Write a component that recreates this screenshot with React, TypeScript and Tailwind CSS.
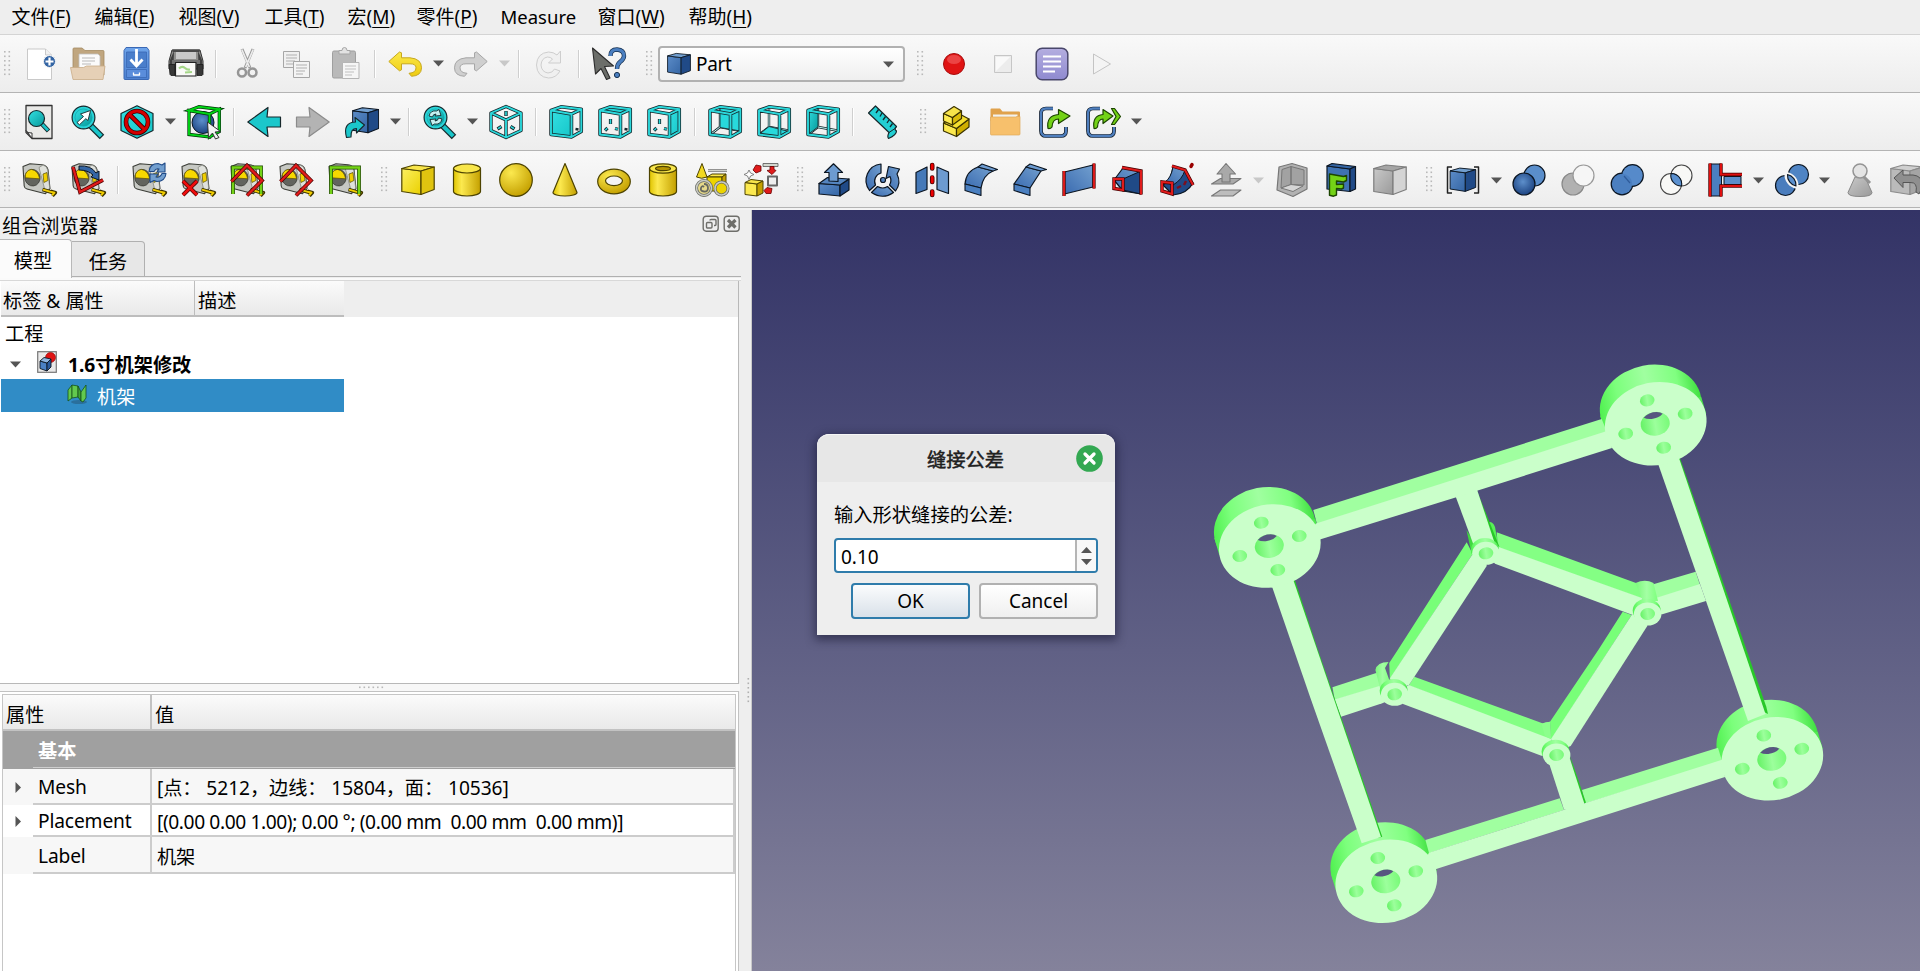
import React from "react";

type Kids = { children?: React.ReactNode };

const INK = "#16282c";
const NAVY = "#0b1521";

function Ico({ children }: Kids) {
  return (
    <div className="flex w-[49px] shrink-0 items-center justify-center">
      <svg width="34" height="34" viewBox="0 0 34 34" fill="none" className="overflow-visible" strokeLinejoin="round">
        {children}
      </svg>
    </div>
  );
}

function Drop({ faded = false }: { faded?: boolean }) {
  return (
    <div className="flex w-[17.300px] shrink-0 items-center justify-center">
      <svg width="11" height="7" viewBox="0 0 11 7">
        <path d="M0 .5h11L5.500 6.500z" fill={faded ? "#c8c8c8" : "#555"} />
      </svg>
    </div>
  );
}

function Sep() {
  return (
    <div className="flex w-[11.400px] shrink-0 items-center justify-center">
      <div className="h-7 w-px bg-[#cfcfcf]" />
      <div className="h-7 w-px bg-white" />
    </div>
  );
}

function Handle({ first = false }: { first?: boolean }) {
  return (
    <div className={first ? "flex w-[14.800px] shrink-0 items-center pl-1" : "flex w-[24px] shrink-0 items-center pl-[12px]"}>
      <svg width="8" height="26" viewBox="0 0 8 26" fill="#b9b9b9">
        {[0, 4.500, 9, 13.500, 18, 22.500].map((y) => (
          <React.Fragment key={y}>
            <rect x="0" y={y} width="1.600" height="1.600" />
            <rect x="4.500" y={y} width="1.600" height="1.600" />
          </React.Fragment>
        ))}
      </svg>
    </div>
  );
}

function Bar({ children, last = false }: Kids & { last?: boolean }) {
  return (
    <div
      className={
        (last ? "h-[57px] pt-[2px]" : "h-[58px]") +
        " flex shrink-0 items-stretch overflow-hidden border-b border-[#b4b4b4] bg-linear-to-b from-[#f9f9f9] to-[#ededed]"
      }
    >
      {children}
    </div>
  );
}

function Defs() {
  return (
    <svg width="0" height="0" className="absolute">
      <defs>
        <linearGradient id="blue" x1="0" y1="0" x2="1" y2="1">
          <stop offset="0" stopColor="#5c8cc8" />
          <stop offset="1" stopColor="#3465a4" />
        </linearGradient>
        <linearGradient id="blueSoft" x1="0" y1="1" x2="1" y2="0">
          <stop offset="0" stopColor="#3a6bb0" />
          <stop offset="1" stopColor="#729fcf" />
        </linearGradient>
        <linearGradient id="yel" x1="0" y1="0" x2="1" y2="1">
          <stop offset="0" stopColor="#fcf060" />
          <stop offset="1" stopColor="#ead000" />
        </linearGradient>
        <linearGradient id="yelH" x1="0" y1="0" x2="1" y2="0">
          <stop offset="0" stopColor="#e0c400" />
          <stop offset=".3" stopColor="#fce94f" />
          <stop offset="1" stopColor="#c4a000" />
        </linearGradient>
        <radialGradient id="yelR" cx=".35" cy=".28" r=".75">
          <stop offset="0" stopColor="#fce94f" />
          <stop offset="1" stopColor="#c4a000" />
        </radialGradient>
        <radialGradient id="blueR" cx=".45" cy=".4" r=".6">
          <stop offset="0" stopColor="#5d8fcb" />
          <stop offset="1" stopColor="#1d4482" />
        </radialGradient>
        <linearGradient id="teal" x1="0" y1="0" x2="1" y2="1">
          <stop offset="0" stopColor="#34e0e2" />
          <stop offset="1" stopColor="#16c6c9" />
        </linearGradient>
        <linearGradient id="tealDark" x1="0" y1="0" x2="1" y2="1">
          <stop offset="0" stopColor="#34e0e2" />
          <stop offset="1" stopColor="#06989a" />
        </linearGradient>
        <linearGradient id="gry" x1="0" y1="0" x2="1" y2="1">
          <stop offset="0" stopColor="#c9c9c9" />
          <stop offset="1" stopColor="#9a9a9a" />
        </linearGradient>
        <linearGradient id="cab" x1="0" y1="0" x2="0" y2="1">
          <stop offset="0" stopColor="#6ea4ea" />
          <stop offset="1" stopColor="#4c80d0" />
        </linearGradient>
        <linearGradient id="undo" x1="0" y1="0" x2="0" y2="1">
          <stop offset="0" stopColor="#fbe94a" />
          <stop offset="1" stopColor="#eecb10" />
        </linearGradient>
        <linearGradient id="note" x1="0" y1="0" x2="0" y2="1">
          <stop offset="0" stopColor="#b4aee0" />
          <stop offset="1" stopColor="#8f8ad0" />
        </linearGradient>
      </defs>
    </svg>
  );
}

/* ---------- icon parts ---------- */

function Solid({ front = "url(#blue)", top = "#729fcf", side = "#204a87", ink = NAVY }: { front?: string; top?: string; side?: string; ink?: string }) {
  return (
    <g stroke={ink} strokeWidth="1.200">
      <path d="M.8 5.500L20 8V31.500L.8 28.500z" fill={front} />
      <path d="M.8 5.500L13 2l20.200 2L20 8z" fill={top} />
      <path d="M20 8l13.200-4v22.500L20 31.500z" fill={side} />
    </g>
  );
}

const EDGE = {
  front: "M2 5.500L22.500 9V32L2 29.500Z",
  top: "M2 5.500L12 1.800L32.300 4.300L22.500 9Z",
  right: "M22.500 9L32.300 4.300V26.500L22.500 32Z",
};

function ViewCube({ fill }: { fill: "front" | "top" | "right" | "rear" | "bottom" | "left" }) {
  const wires = EDGE.front + EDGE.top + EDGE.right;
  const faces: Record<string, string> = {
    ...EDGE,
    rear: "M12 1.800L32.300 4.300V26L12 22.500Z",
    bottom: "M2 29.500L12 21.500L32.300 26.500L22.500 32Z",
    left: "M2 5.500L12 1.800V22L2 29.500Z",
  };
  const back = fill === "rear" || fill === "bottom" || fill === "left";
  return (
    <>
      {back ? (
        <>
          <path d="M12 3V22L3 29M12 22L31 25.500" stroke={INK} strokeWidth="2.400" />
          <path d="M12 3V22L3 29M12 22L31 25.500" stroke="#bff3f3" strokeWidth="1" />
          <path d={faces[fill]} fill={fill === "left" ? "url(#tealDark)" : "#28d9dc"} stroke={INK} strokeWidth=".9" />
        </>
      ) : (
        <>
          <path d="M12.500 14v5M9.500 23L7 25.500M17 23.500l3 .8" stroke={INK} strokeWidth="3.200" />
          <path d="M12.500 14.300v4.400M9.300 23.200L7.200 25.300M17.200 23.500l2.600 .7" stroke="#2adadd" strokeWidth="1.500" />
          {fill !== "right" && <path d="M26.500 24l3 .5" stroke={INK} strokeWidth="2.400" />}
          <path d={faces[fill]} fill="url(#teal)" />
        </>
      )}
      <path d={wires} stroke={INK} strokeWidth="3.500" />
      <path d={wires} stroke="#2bd8db" strokeWidth="1.900" />
    </>
  );
}

function Lens({ children, x = 13, y = 12 }: Kids & { x?: number; y?: number }) {
  return (
    <>
      <path d={`M${x + 6} ${y + 7}L${x + 18.500} ${y + 19.500}`} stroke={INK} strokeWidth="6.400" strokeLinecap="butt" />
      <path d={`M${x + 6} ${y + 7}L${x + 17.700} ${y + 18.700}`} stroke="#19c5c9" strokeWidth="4" />
      <circle cx={x} cy={y} r="11.400" fill="#2bd4d8" stroke={INK} strokeWidth="1.200" />
      <circle cx={x} cy={y} r="8.600" fill="url(#tealDark)" stroke="#0a9ea3" strokeWidth=".6" />
      {children}
    </>
  );
}

function Tape({ children }: Kids) {
  return (
    <>
      <path d="M1 3.500L8 .7l12 1q5 .6 6 5l2 19-4.500 5L5 26q-2.500-.6-2.800-3z" fill="#c6c8c3" stroke="#3a3c36" strokeWidth="1.100" />
      <path d="M17 4.500l4-2.500q4 1 4.700 5l2 18-4 5z" fill="#dfe1dc" stroke="#7b7d76" strokeWidth=".7" />
      <path d="M21 11l4-1.500.9 8-4 2z" fill="#f1cf00" stroke="#544a00" strokeWidth=".7" />
      <ellipse cx="10.500" cy="14.700" rx="7.600" ry="8.300" fill="#62645e" stroke="#33352f" strokeWidth=".7" transform="rotate(-8 10.500 14.700)" />
      <path d="M3.300 14.800Q2.700 7.500 9.300 6.400q6.800.9 8.400 9.400z" fill="#f7d800" stroke="#5a4d00" strokeWidth=".7" />
      <path d="M20.500 26.500l10 3M28.500 28l5 1.600-3 3.400" stroke="#3b3300" strokeWidth="3.400" />
      <path d="M21 26.600l9.500 2.800M29.500 28.800l3 .9-2.300 2.600" stroke="#f1cc00" strokeWidth="1.900" />
      {children}
    </>
  );
}

function Stroke2({ d, c, w = 2.400, o = "#4a0000" }: { d: string; c: string; w?: number; o?: string }) {
  return (
    <>
      <path d={d} stroke={o} strokeWidth={w + 1.400} strokeLinejoin="miter" />
      <path d={d} stroke={c} strokeWidth={w} strokeLinejoin="miter" />
    </>
  );
}

/* ---------- toolbars ---------- */

function FileBar() {
  return (
    <Bar>
      <Handle first />
      <Ico>
        <path d="M5.500 2h18l6 6v24.500h-24z" fill="#fff" stroke="#c9c9c9" strokeWidth="1" />
        <path d="M23.500 2v6h6" fill="#f1f1f1" stroke="#c9c9c9" />
        <circle cx="27.500" cy="14.500" r="6" fill="#3465a4" stroke="#f6f6f6" />
        <path d="M27.500 10.500v8M23.500 14.500h8" stroke="#fff" strokeWidth="2.200" />
      </Ico>
      <Ico>
        <path d="M2 2q0-1 1-1h8l3 2.500h18q1 0 1 1V28H2z" fill="#c0a67f" stroke="#a58c62" strokeWidth=".8" />
        <path d="M8 7h19l2 2v20H8z" fill="#fbfbfb" stroke="#c0c0c0" strokeWidth=".8" />
        <path d="M11 11h13M11 14h13M11 17h9" stroke="#b9b9b9" />
        <path d="M-.500 20.500h13l3-1.500h18.500L32 32.500H2z" fill="#e6d0b6" stroke="#c9ac88" strokeWidth=".8" />
      </Ico>
      <Ico>
        <path d="M6 .500h21l2 3v28q0 1-1 1H5q-1 0-1-1v-28z" fill="url(#cab)" stroke="#3a68b4" />
        <rect x="6.500" y="5" width="20" height="15.500" fill="#4a7ecb" stroke="#3a68b4" strokeWidth=".8" />
        <rect x="6.500" y="22.500" width="20" height="8" fill="#5a8ddb" stroke="#3a68b4" strokeWidth=".8" />
        <path d="M16.500 2v16M10.500 12.500l6 6.500 6-6.500" stroke="#fff" strokeWidth="2.800" strokeLinejoin="miter" />
        <path d="M13.500 25.500V28h6v-2.500" stroke="#fff" strokeWidth="1.300" />
      </Ico>
      <Ico>
        <path d="M3 3h28l3 11v8H0v-8z" fill="#8f8f8d" stroke="#333" />
        <path d="M7 4.500h20v7.500H7z" fill="#c9c9c9" />
        <path d="M3.500 2.500h27V5h-27z" fill="#4a4a4a" />
        <path d="M29 4l4 9v5h-3.500zM5 4L1 13v5h3.500z" fill="#3f3f3f" />
        <path d="M0 17.500h6v11H2l-1-1zM28 17.500h6v10l-1 1h-5z" fill="#383838" stroke="#1c1c1c" strokeWidth=".8" />
        <path d="M3 13h28v4H3z" fill="#707070" />
        <path d="M6.500 15.500h20.500v13.500H6.500z" fill="#f9f9f7" stroke="#222" strokeWidth="1.200" />
        <path d="M10 21.500q3-3 6-.5 2 2 5 1.500M16 25.500l7-.5" stroke="#a5d688" strokeWidth="2.200" />
      </Ico>
      <Sep />
      <Ico>
        <path d="M12 2l8 19M23 2l-8 19" stroke="#9a9a9a" strokeWidth="3" />
        <path d="M11.800 2.500l7.500 17.500M23.200 2.500l-7.500 17.500" stroke="#ececec" strokeWidth="1.700" />
        <circle cx="12" cy="25.500" r="4" stroke="#959595" strokeWidth="2.500" />
        <circle cx="22.500" cy="25.500" r="4" stroke="#959595" strokeWidth="2.500" />
      </Ico>
      <Ico>
        <rect x="4.500" y="4.500" width="16" height="16" fill="#f0f0f0" stroke="#a6a6a6" />
        <path d="M7 8h11M7 11h11M7 14h9M7 17h7" stroke="#b0b0b0" />
        <rect x="14.500" y="14.500" width="16" height="16" fill="#f4f4f4" stroke="#a6a6a6" />
        <path d="M17 18h11M17 21h11M17 24h9M17 27h7" stroke="#b0b0b0" />
      </Ico>
      <Ico>
        <rect x="4.500" y="4" width="23" height="27" rx="1.500" fill="#b9b9b9" stroke="#9f9f9f" />
        <path d="M11 7V3.500h3a2.500 3 0 0 1 5 0h3V7z" fill="#e2e2e2" stroke="#a5a5a5" />
        <rect x="14.500" y="15.500" width="16.500" height="16" fill="#f6f6f6" stroke="#b5b5b5" />
        <path d="M17 19h11M17 22h11M17 25h9M17 28h7" stroke="#c0c0c0" />
      </Ico>
      <Sep />
      <Ico>
        <path d="M.800 14.500L11.500 5l2 .8v5H22q11.500 1 11.500 10 0 8-10 8.500l-2.500-3q7-.5 7-5.500 0-4-6-4h-8.500v6l-2 1z" fill="url(#undo)" stroke="#c7a81e" strokeWidth="1" />
      </Ico>
      <Drop />
      <Ico>
        <path d="M33.200 14.500L22.500 5l-2 .8v5H12Q.5 12 .5 20.800.5 28.800 10.500 29.300l2.500-3q-7-.5-7-5.500 0-4 6-4h8.500v6l2 1z" fill="#cfcfcf" stroke="#a6a6a6" strokeWidth="1" />
      </Ico>
      <Drop faded />
      <Sep />
      <Ico>
        <path d="M28 24q-4 7-11.500 7Q5 30 4.500 18 5 6 16.500 5q5 0 8.500 3l3.500-4v12h-12l4-4q-2-2-5-2-6 1-6.500 8 .5 7 7 8 4.500 0 6.500-4z" fill="#f0f0f0" stroke="#cecece" />
      </Ico>
      <Sep />
      <Ico>
        <path d="M.500 1l21 18-9 .5L18 31l-3.500 1.500L9 21.500 3.500 27z" fill="#6c6e6a" stroke="#2b2b2b" strokeWidth="1.100" />
        <Stroke2 d="M18.500 9q0-6.500 6.500-6.500 7 .5 7 6.500 0 3-4 6-3 2.500-3 7" c="#4b7fc0" w={3} o="#16304f" />
        <circle cx="25" cy="28" r="2.600" fill="#4b7fc0" stroke="#16304f" />
      </Ico>
      <Handle />
      <div className="mt-[11px] flex h-[36px] w-[247.500px] shrink-0 items-center rounded-[4px] border-2 border-[#b1b1b1] bg-linear-to-b from-white to-[#efefef] pr-[6px] pl-[7px]">
        <svg width="24" height="24" viewBox="0 0 34 34" fill="none">
          <Solid />
        </svg>
        <span className="mt-px ml-[5px] grow text-[19px] leading-none tracking-[-0.3px]">Part</span>
        <Drop />
      </div>
      <Handle />
      <Ico>
        <circle cx="17" cy="17" r="10.500" fill="#e01414" stroke="#a80d0d" />
        <ellipse cx="17" cy="12.500" rx="7" ry="4.500" fill="#ec4444" />
      </Ico>
      <Ico>
        <rect x="8.500" y="8.500" width="17" height="17" fill="#ececec" stroke="#c6c6c6" />
        <path d="M10 24V10h14z" fill="#f9f9f9" />
      </Ico>
      <Ico>
        <rect x="1.200" y="1.200" width="31.600" height="31.600" rx="6" fill="url(#note)" stroke="#49476b" strokeWidth="1.500" />
        <path d="M8 9.500h18M8 14.500h18M8 19.500h18M8 24.500h12" stroke="#fff" strokeWidth="1.800" />
      </Ico>
      <Ico>
        <path d="M9.500 7l17 10-17 10z" fill="#f4f4f4" stroke="#c4c4c4" />
      </Ico>
    </Bar>
  );
}

function ViewBar() {
  const iso = "M17 1.500L32 8V25.500L17 32.500L2 25.500V8ZM2 8L17 15L32 8M17 15V32.500";
  return (
    <Bar>
      <Handle first />
      <Ico>
        <path d="M4 .5h26v33H10l-6-6z" fill="#e9e9e7" stroke="#333" strokeWidth="1.300" />
        <path d="M4 25.500q1 3 6 2.500V33z" fill="#fff" stroke="#333" strokeWidth="1" />
        <path d="M19 18l7.500 8" stroke={INK} strokeWidth="4.600" />
        <path d="M19 18l7 7.400" stroke="#19c5c9" strokeWidth="2.800" />
        <circle cx="14.500" cy="13.500" r="8" fill="url(#tealDark)" stroke={INK} strokeWidth="1.200" />
      </Ico>
      <Ico>
        <Lens x={12.500} y={12.500}>
          <path d="M6 17.500L12.500 11.500l-3-2.500 10-3.500L17 15.500l-2.200-1.800-6.300 6z" fill="#fff" stroke={INK} strokeWidth=".9" />
        </Lens>
      </Ico>
      <Ico>
        <path d="M17 .8l16 7.700v17L17 33.200 1 25.500v-17z" fill="url(#teal)" stroke={INK} strokeWidth="1.200" />
        <circle cx="17" cy="17" r="11" stroke="#3c0000" strokeWidth="4.600" />
        <path d="M9.500 9.500l15 15" stroke="#3c0000" strokeWidth="4.600" />
        <circle cx="17" cy="17" r="11" stroke="#d40000" strokeWidth="3.100" />
        <path d="M9.500 9.500l15 15" stroke="#d40000" strokeWidth="3.100" />
      </Ico>
      <Drop />
      <Ico>
        <circle cx="16" cy="17.500" r="11" fill="url(#blueR)" stroke={NAVY} />
        <Stroke2 d={EDGE.front + EDGE.top + EDGE.right} c="#00d414" w={1.900} o="#00360a" />
        <path d="M20.500 17l13 9.500-5.500.5 4 5.500-3.500 1.500-3-6-4 4.500z" fill="#f2f2f2" stroke="#333" strokeWidth="1" />
      </Ico>
      <Sep />
      <Ico>
        <path d="M.800 17L21 2.500 20 12h13.500v10H20l1 9.500z" fill="#1bc7cb" stroke={INK} strokeWidth="1.200" />
      </Ico>
      <Ico>
        <path d="M33.200 17L13 2.500 14 12H.500v10H14l-1 9.500z" fill="#b3b3b3" stroke="#8b8b8b" strokeWidth="1.200" />
      </Ico>
      <Ico>
        <g transform="translate(7 1) scale(.8 .85)">
          <Solid />
        </g>
        <path d="M1.500 32.500q-4-15 9-15.500l-.5-4.500L19.500 20l-8 8v-4.500q-6 0-5.500 8.500z" fill="#1bc7cb" stroke={INK} strokeWidth="1.100" />
      </Ico>
      <Drop />
      <Sep />
      <Ico>
        <Lens x={12.500} y={12.500}>
          <path d="M6 11q1.500-6 7.500-5l2.500-1.500 2 6-6 .5 1-2q-3 0-3.500 3zM19 14q-1.500 6-7.500 5L9 20.500l-2-6 6-.5-1 2q3 0 3.500-3z" fill="#c5f0f0" stroke={INK} strokeWidth=".9" />
        </Lens>
      </Ico>
      <Drop />
      <Ico>
        <path d="M17 6v5M8.500 24l4-2.500M25.500 24l-4-2.500" stroke={INK} strokeWidth="3.400" />
        <path d="M17 6.500v4M9 23.600l3-1.900M25 23.600l-3-1.900" stroke="#2adadd" strokeWidth="1.600" />
        <path d={iso} stroke={INK} strokeWidth="3.400" />
        <path d={iso} stroke="#2bd8db" strokeWidth="1.900" />
      </Ico>
      <Sep />
      <Ico><ViewCube fill="front" /></Ico>
      <Ico><ViewCube fill="top" /></Ico>
      <Ico><ViewCube fill="right" /></Ico>
      <Sep />
      <Ico><ViewCube fill="rear" /></Ico>
      <Ico><ViewCube fill="bottom" /></Ico>
      <Ico><ViewCube fill="left" /></Ico>
      <Sep />
      <Ico>
        <path d="M2.500 8L9.500 1 30.500 21.500q-3 2 0 4.500 0 4-8 7.500-1.500-2 .5-6z" fill="#22cfd3" stroke={INK} strokeWidth="1.200" />
        <path d="M23 27.500l7.500-5" stroke={INK} />
        <path d="M12.500 4.500L10 8M16 8l-2 3.500M19.500 11.500L17 15M23 15l-2 3M26.500 18.500L24 22" stroke={INK} strokeWidth="1.300" />
      </Ico>
      <Handle />
      <Ico>
        <g stroke="#3b3300" strokeWidth="1.200">
          <path d="M4.500 18l13 5.500v8L4.500 26z" fill="#fce94f" />
          <path d="M17.500 23.500L30 14v8l-12.500 9.500z" fill="#cfae00" />
          <path d="M4.500 18l8-5 9-3.500L30 14l-12.500 9.500z" fill="#f5df30" />
          <path d="M4.500 8.500l9 4V20l-9-4z" fill="#fce94f" />
          <path d="M13.500 12.500L22.500 6v7.500L13.500 20z" fill="#dabb0a" />
          <path d="M4.500 8.500L15 1.500l7.500 4.500-9 6.500z" fill="#f7e34a" />
        </g>
      </Ico>
      <Ico>
        <path d="M2.500 4.500q0-1 1-1H12l2.500 3H31q1 0 1 1V16H2.500z" fill="#e0a24c" />
        <path d="M5 9.500h24.500v5H5z" fill="#f2f2ee" />
        <path d="M2.500 12h26v-.5H32v17.500q0 1-1 1H3.500q-1 0-1-1z" fill="#f7c06c" stroke="#dfa95a" strokeWidth=".7" />
      </Ico>
      <Ico>
        <Stroke2 d="M16 3.500H9q-5 0-5 5v17q0 5.500 5 5.500h15q5 0 5-5V22" c="#4f7fbe" w={2.300} o={NAVY} />
        <path d="M11 23.500q-2-13 10.500-14V4.500L33 11l-11.500 7.500V14q-6 0-6.500 8-1.500 2-4 1.500z" fill="#73d216" stroke="#1c4500" strokeWidth="1.200" />
      </Ico>
      <Ico>
        <Stroke2 d="M14 3.500H7q-5 0-5 5v17q0 5.500 5 5.500h16q5 0 5-5V22" c="#4f7fbe" w={2.300} o={NAVY} />
        <path d="M8 23.500q-2-13 9-14V4.500L27 11l-10 7.500V14q-5 0-5.500 8-1.500 2-3.500 1.500z" fill="#73d216" stroke="#1c4500" strokeWidth="1.200" />
        <path d="M25.500 3.500h3l6 8-6 8h-3l4.500-8z" fill="#73d216" stroke="#1c4500" strokeWidth="1.200" />
      </Ico>
      <Drop />
    </Bar>
  );
}

function PartBar() {
  return (
    <Bar last>
      <Handle first />
      <Ico><Tape /></Ico>
      <Ico>
        <Tape>
          <path d="M8 3q12-1 17 7l3-2v9l-8-3 2-2Q17 7 8 7z" fill="#3465a4" stroke={NAVY} />
          <Stroke2 d="M2 4l7 25 23-12" c="#e01b1b" />
        </Tape>
      </Ico>
      <Sep />
      <Ico>
        <Tape>
          <path d="M17 8.500q1-8 9-8l4 1.500 3-2v9h-8l2-3q-3-1-5 2.500zM34 10.500q-1 8-9 8l-3-1-4 2V11h8l-2 3q4 1 6-3.500z" fill="#729fcf" stroke="#204a87" strokeWidth="1.100" />
        </Tape>
      </Ico>
      <Ico>
        <Tape>
          <Stroke2 d="M2 18l14 14M16 18L2 32" c="#ef0d0d" w={2.600} />
        </Tape>
      </Ico>
      <Ico>
        <Tape>
          <Stroke2 d="M3 31V4.500h28V31" c="#73d216" w={2.400} o="#1c4500" />
          <Stroke2 d="M1.500 18.500L17 2.500l15 15-15 15" c="#e01b1b" />
        </Tape>
      </Ico>
      <Ico>
        <Tape>
          <Stroke2 d="M1.500 18.500L17 2.500l15 15-15 15" c="#e01b1b" />
        </Tape>
      </Ico>
      <Ico>
        <Tape>
          <Stroke2 d="M3 31V4.500h28V31" c="#73d216" w={2.400} o="#1c4500" />
        </Tape>
      </Ico>
      <Handle />
      <Ico>
        <Solid front="url(#yel)" top="#f8e54a" side="#e0c410" ink="#4d4300" />
      </Ico>
      <Ico>
        <path d="M3.500 5.500v23a13.500 4.500 0 0 0 27 0v-23z" fill="url(#yelH)" stroke="#4d4300" strokeWidth="1.200" />
        <ellipse cx="17" cy="5.500" rx="13.500" ry="4.500" fill="#f8e64a" stroke="#4d4300" strokeWidth="1.200" />
      </Ico>
      <Ico>
        <circle cx="17" cy="17" r="16.300" fill="url(#yelR)" stroke="#4d4300" strokeWidth="1.200" />
      </Ico>
      <Ico>
        <path d="M17 .5L5 29.500a12 3.500 0 0 0 24 0z" fill="url(#yelH)" stroke="#4d4300" strokeWidth="1.200" />
      </Ico>
      <Ico>
        <ellipse cx="17" cy="18.500" rx="16.300" ry="12.300" fill="url(#yelR)" stroke="#4d4300" strokeWidth="1.200" />
        <ellipse cx="17" cy="17.800" rx="8.500" ry="4.800" fill="#f4f4f4" stroke="#4d4300" strokeWidth="1.200" />
      </Ico>
      <Ico>
        <path d="M3.500 5.500v23a13.500 4.500 0 0 0 27 0v-23z" fill="url(#yelH)" stroke="#4d4300" strokeWidth="1.200" />
        <ellipse cx="17" cy="5.500" rx="13.500" ry="4.700" fill="#f8e64a" stroke="#4d4300" strokeWidth="1.200" />
        <ellipse cx="17" cy="5.500" rx="7.500" ry="2.200" fill="#b59400" stroke="#4d4300" strokeWidth="1.200" />
      </Ico>
      <Ico>
        <path d="M12 14l5-3h14l-4 3z" fill="#fce94f" stroke="#4d4300" />
        <path d="M12 14h15v14H12z" fill="#edd400" stroke="#4d4300" />
        <path d="M27 14l4-3v14l-4 3z" fill="#c4a000" stroke="#4d4300" />
        <path d="M7 .5L1.500 14q5 2.500 10.500 0z" fill="#f2d920" stroke="#4d4300" />
        <Stroke2 d="M13 7.500h19" c="#d0d2cc" w={1.400} o="#777" />
        <circle cx="9" cy="25" r="7.500" fill="#e6d98a" stroke="#666860" strokeWidth="3" />
        <circle cx="9" cy="25" r="7.500" stroke="#c9cbc4" strokeWidth="1.600" />
        <path d="M9 21q4 0 4 4t-4 3.500-3-3.500 3-1" stroke="#666860" strokeWidth="1.800" />
        <circle cx="26.500" cy="25.500" r="6.500" fill="#edd400" stroke="#666860" strokeWidth="3" />
        <circle cx="26.500" cy="25.500" r="6.500" stroke="#c9cbc4" strokeWidth="1.600" />
      </Ico>
      <Ico>
        <path d="M1 19.500l12 1.500v12L1 31.500z" fill="#fce94f" stroke="#4d4300" />
        <path d="M1 19.500l6-3 12 1.500-6 3z" fill="#f7e34a" stroke="#4d4300" />
        <path d="M13 21l6-3v12l-6 3z" fill="#c4a000" stroke="#4d4300" />
        <path d="M5 7l1.500 3L10 11.500 6.500 13 5 16.500 3.500 13 0 11.500 3.500 10z" fill="#fff" stroke="#777" strokeWidth=".9" />
        <path d="M19 .5h15v3H19z" fill="#d3d7cf" stroke="#555" strokeWidth=".8" />
        <rect x="24" y="13.500" width="9" height="9" fill="#eee" stroke="#666" strokeWidth="2" />
        <path d="M9 7l3-5 5 1v5l-5 2zM26 3.500h4v3l2 1-4 4-5-4 3-.5zM23 24.500l5 1-1 5h-5l-2-3z" fill="#e01b1b" stroke="#6a0000" strokeWidth=".8" />
      </Ico>
      <Handle />
      <Ico>
        <path d="M2 20.500l21 1.500v11L2 31z" fill="url(#blue)" stroke={NAVY} strokeWidth="1.200" />
        <path d="M23 22l9-6v11l-9 6z" fill="#204a87" stroke={NAVY} strokeWidth="1.200" />
        <path d="M2 20.500L10.500 14.500 32 16l-9 6z" fill="#5484bf" stroke={NAVY} strokeWidth="1.200" />
        <path d="M16.500 .8L25.500 9.500H21v9l-9-.5V9.500H7.500z" fill="#6d9bd0" stroke={NAVY} strokeWidth="1.200" />
      </Ico>
      <Ico>
        <g fill="url(#blueSoft)" stroke={NAVY} strokeWidth="1.200">
          <path d="M15 1v9A8.500 8.500 0 0 0 9.500 22l-6 5.500A16.500 16.500 0 0 1 15 1z" />
          <path d="M5.500 29.500l6-6q5.500 3 10 0l6 6Q17 37 5.500 29.500z" />
          <path d="M31 11q4.500 9-1.500 17L23.500 22q2.500-4 .5-8.500L20 15.500 22.500 3.500 33.500 6z" />
          <circle cx="17" cy="17" r="2.500" />
        </g>
      </Ico>
      <Ico>
        <path d="M1 9.500L12 4v22.500L1 30.500z" fill="#4579b8" stroke={NAVY} strokeWidth="1.200" />
        <path d="M22 4l11.500 5v21.500L22 26.500z" fill="#6d9bd0" stroke={NAVY} strokeWidth="1.200" />
        <path d="M17.200 2v3.500M17.200 14.500v4.500M17.200 28.500V32" stroke="#4a0000" strokeWidth="4.600" strokeLinecap="round" />
        <path d="M17.200 2v3.500M17.200 14.500v4.500M17.200 28.500V32" stroke="#e00" strokeWidth="2.800" strokeLinecap="round" />
      </Ico>
      <Ico>
        <path d="M1 21Q2 8 14 4l15 4q-10 4-12 17z" fill="url(#blueSoft)" stroke={NAVY} strokeWidth="1.200" />
        <path d="M1 21l16 4v7.500L1 27.500z" fill="#4a7fc0" stroke={NAVY} strokeWidth="1.100" />
        <path d="M14 4l4-3L33.500 6.500 29 8z" fill="#6d9bd0" stroke={NAVY} strokeWidth="1.100" />
      </Ico>
      <Ico>
        <path d="M1 21L13 4l15 4-11 17z" fill="url(#blueSoft)" stroke={NAVY} strokeWidth="1.200" />
        <path d="M1 21l16 4v7.500L1 27.500z" fill="#4a7fc0" stroke={NAVY} strokeWidth="1.100" />
        <path d="M13 4l4-3L33.500 6.500 28 8z" fill="#6d9bd0" stroke={NAVY} strokeWidth="1.100" />
      </Ico>
      <Ico>
        <path d="M2.500 9L31 2v22L2.500 31z" fill="url(#blueSoft)" stroke={NAVY} strokeWidth="1.200" />
        <Stroke2 d="M2 8v25M32 .5v25" c="#e01b1b" w={1.900} />
      </Ico>
      <Ico>
        <path d="M3 17L12 5l18 3v23l-18-3z" fill="url(#blueSoft)" stroke={NAVY} strokeWidth="1.200" />
        <path d="M12 16L30 8v23l-18-4z" fill="#204a87" stroke={NAVY} />
        <Stroke2 d="M11 4.500L30 8v23.500" c="#e01b1b" w={2} />
        <Stroke2 d="M3 16h9v11L3 25.500z" c="#e01b1b" w={2} />
      </Ico>
      <Ico>
        <path d="M3 22Q11 18 13 4l12 3 8 13Q27 31 13 32z" fill="#204a87" stroke={NAVY} strokeWidth="1.200" />
        <path d="M5 19Q11 15 13 4l12 3Q22 17 13 22z" fill="url(#blueSoft)" stroke={NAVY} strokeWidth="1" />
        <path d="M17 25l4-2M24 22l2-4" stroke="#7a1020" strokeWidth="2.500" />
        <Stroke2 d="M12 3l13 4 8 15" c="#e01b1b" w={2} />
        <Stroke2 d="M2 19l10 1v11L2 28z" c="#e01b1b" w={2} />
        <path d="M31 3.500l1-2" stroke="#900" strokeWidth="3.500" strokeLinecap="round" />
      </Ico>
      <Ico>
        <g fill="#a9a9a9" stroke="#777" strokeWidth="1.100">
          <path d="M2.500 21l9-5.500H32L24 21z" />
          <path d="M2.500 33l9-6H32l-8 6z" fill="#bdbdbd" />
          <path d="M17 .5L26.500 11H21v8h-8v-8H8z" />
        </g>
      </Ico>
      <Drop faded />
      <Ico>
        <path d="M4 4L17 .5 32 5v21l-14 7.500L2 27z" fill="#b2b2b2" stroke="#777" strokeWidth="1.200" />
        <path d="M7 6.500l9-3v18L6 25zM16 3.500L29 7v15l-13-.5z" fill="#a2a2a2" stroke="#777" />
        <path d="M6 25l10-3.500L28 23l-10 5.500z" fill="#d5d5d5" stroke="#777" />
      </Ico>
      <Ico>
        <path d="M3 3l23 3v22.500L3 26z" fill="#3f72b2" stroke={NAVY} strokeWidth="1.200" />
        <path d="M3 3l5-2.500 23.500 3L26 6z" fill="#3465a4" stroke={NAVY} strokeWidth="1.200" />
        <path d="M26 6l5.500-2.500V26L26 28.500z" fill="#204a87" stroke={NAVY} strokeWidth="1.200" />
        <path d="M5.500 11l14 2.500 3-1v5l-3 1.500-7-1v3.500l7-.5v4l-2 1-5-.5v6.500l-3 1.200-4-1z" fill="#73d216" stroke="#1c4500" strokeWidth="1.400" />
      </Ico>
      <Ico>
        <Solid front="url(#gry)" top="#a5a5a5" side="#d4d4d4" ink="#7c7c7c" />
      </Ico>
      <Handle />
      <Ico>
        <path d="M6 4H1.500v26H6M28 4h4.500v26H28" stroke="#222" strokeWidth="1.500" />
        <g transform="translate(3.500 3.500) scale(.79)">
          <Solid />
        </g>
      </Ico>
      <Drop />
      <Ico>
        <circle cx="22.500" cy="12.500" r="10.500" fill="#5a8ecb" stroke={NAVY} strokeWidth="1.200" />
        <circle cx="12" cy="21" r="11" fill="url(#blueR)" stroke={NAVY} strokeWidth="1.200" />
      </Ico>
      <Ico>
        <circle cx="12" cy="21" r="11" fill="#b1b1b1" stroke="#888" strokeWidth="1.200" />
        <circle cx="22.500" cy="12.500" r="10.500" fill="#f6f6f6" stroke="#999" strokeWidth="1.200" />
      </Ico>
      <Ico>
        <g stroke={NAVY} strokeWidth="2.400">
          <circle cx="22.500" cy="12.500" r="10.200" />
          <circle cx="12" cy="21" r="10.200" />
        </g>
        <circle cx="22.500" cy="12.500" r="10.200" fill="#568aca" />
        <circle cx="12" cy="21" r="10.200" fill="#4b7fc0" />
        <path d="M14 13l6 7" stroke="#2f5c9a" strokeWidth="1.200" />
      </Ico>
      <Ico>
        <g stroke="#444" strokeWidth="1.100">
          <circle cx="22.500" cy="12.500" r="10.500" fill="#f8f8f6" />
          <circle cx="12" cy="21" r="10.500" fill="#f8f8f6" />
          <path d="M12 10.500a10.500 10.500 0 0 1 10.500 12.500 10.500 10.500 0 0 1-10.500-12.500z" fill="#5b90cf" stroke={NAVY} />
        </g>
      </Ico>
      <Ico>
        <path d="M2.500 1h11v32h-11z" fill="#4a7fc0" stroke={NAVY} />
        <path d="M16 13.500h17v8H16z" fill="#5a8ecb" stroke={NAVY} />
        <Stroke2 d="M2 .5v33M13 .5v11h21M13 33.500V23h21" c="#e01010" w={2} />
      </Ico>
      <Drop />
      <Ico>
        <circle cx="23.500" cy="11.500" r="10" fill="#4f84c4" stroke={NAVY} strokeWidth="1.200" />
        <circle cx="10.500" cy="22.500" r="10" fill="#4a7dbd" stroke={NAVY} strokeWidth="1.200" />
        <path d="M11.500 11a12 12 0 0 1 10 12.500 12 12 0 0 1-10-12.500z" fill="#5b90cf" stroke="#f4f4f4" strokeWidth="4" />
        <path d="M12.500 11.500a11 11 0 0 1 8.500 11.500 11 11 0 0 1-8.500-11.500z" fill="#5b90cf" stroke={NAVY} strokeWidth="1.100" />
      </Ico>
      <Drop />
      <Ico>
        <g transform="translate(2 0)">
          <path d="M12 14L5 29.500q0 4 12 4t12-4L22 14z" fill="url(#gry)" stroke="#888" />
          <circle cx="17" cy="8" r="7" fill="#e4e4e4" stroke="#949494" strokeWidth="1.500" />
          <path d="M21 14l6 6" stroke="#949494" strokeWidth="3" />
        </g>
      </Ico>
      <Ico>
        <Solid front="#bababa" top="#cfcfcf" side="#a5a5a5" ink="#8a8a8a" />
        <path d="M4 15l9-8v5h10q9 1 9 9 0 6-3 10l-3-2q2-10-6-9.500H13v5z" fill="#8f8f8f" stroke="#555" />
      </Ico>
    </Bar>
  );
}

/* ---------- menu ---------- */

const MENU: [string, string, string][] = [
  ["文件", "F", "w-[83px]"],
  ["编辑", "E", "w-[84px]"],
  ["视图", "V", "w-[86px]"],
  ["工具", "T", "w-[83px]"],
  ["宏", "M", "w-[69px]"],
  ["零件", "P", "w-[84px]"],
  ["Measure", "", "w-[97px]"],
  ["窗口", "W", "w-[91px]"],
  ["帮助", "H", "w-[83px]"],
];

function MenuBar() {
  return (
    <div className="flex h-[35px] shrink-0 items-center border-b border-[#d4d4d4] bg-[#eeeeee] pl-[11.500px] text-[19px]">
      {MENU.map(([label, key, w]) => (
        <div key={label} className={w + " shrink-0 whitespace-nowrap leading-none" + (key ? "" : " text-[18.500px]")}>
          {label}
          {key && (
            <>
              (<span className="underline decoration-1 underline-offset-[3px]">{key}</span>)
            </>
          )}
        </div>
      ))}
    </div>
  );
}

/* ---------- left dock ---------- */

function TreePane() {
  return (
    <div className="flex h-[403px] w-[739px] flex-col border-r border-b border-[#b8b8b8] bg-white pl-px">
      <div className="flex h-[36px] shrink-0 bg-[#eeeeee] leading-none">
        <div className="flex w-[194px] items-center border-r border-b-2 border-[#bdbdbd] bg-linear-to-b from-[#fbfbfb] to-[#e9e9e9] pt-[5px] pl-[2px]">标签 &amp; 属性</div>
        <div className="flex w-[149px] items-center border-b-2 border-[#bdbdbd] bg-linear-to-b from-[#fbfbfb] to-[#e9e9e9] pt-[5px] pl-[3px]">描述</div>
      </div>
      <div className="flex h-[32px] items-center pt-px pl-[4px] leading-none">工程</div>
      <div className="flex h-[30px] items-center pl-[9px] leading-none">
        <svg width="11" height="7" viewBox="0 0 11 7">
          <path d="M0 .5h11L5.500 6.500z" fill="#555" />
        </svg>
        <svg width="20" height="22" viewBox="0 0 20 22" className="-mt-1 ml-[16px]" fill="none">
          <rect x=".7" y=".7" width="18.600" height="20.600" fill="#e9e9e9" stroke="#777" strokeWidth="1.200" />
          <circle cx="13.500" cy="6.500" r="5" fill="#e01414" stroke="#8a0000" strokeWidth=".6" />
          <path d="M3 10l7 2v8l-7-2.500z" fill="#4a80c4" stroke={NAVY} strokeWidth=".9" />
          <path d="M3 10l4-3.500 7 1.500-4 4z" fill="#8db4e0" stroke={NAVY} strokeWidth=".9" />
          <path d="M10 12l4-4v8l-4 4z" fill="#2b5a9c" stroke={NAVY} strokeWidth=".9" />
        </svg>
        <span className="mt-px ml-[11px] font-bold">1.6寸机架修改</span>
      </div>
      <div className="flex h-[33px] w-[343px] items-center bg-[#308cc6] pl-[66px] leading-none text-white">
        <svg width="20" height="20" viewBox="0 0 20 20" fill="none" className="-mt-1 overflow-visible">
          <ellipse cx="12" cy="18" rx="8" ry="2" fill="#2a6f9c" />
          <g stroke="#14501a" strokeWidth=".8" fill="#62c94e">
            <path d="M1 6l4-5v13l-4 3z" />
            <path d="M5 1l6 1v11l-6 1z" />
            <path d="M11 2l3 6v9l-3-4z" fill="#3fa534" />
            <path d="M14 8l5-7v13l-3 4-2-1z" />
          </g>
        </svg>
        <span className="mt-[3px] ml-[10px]">机架</span>
      </div>
    </div>
  );
}

function PropRow({ name, value, tone, h, arrow = true }: { name: string; value: string; tone: string; h: string; arrow?: boolean }) {
  return (
    <div className={"flex shrink-0 leading-none " + tone + " " + h}>
      <div className="flex w-[30px] items-center pl-[12px]">
        {arrow && (
          <svg width="6" height="11" viewBox="0 0 6 11">
            <path d="M.5 0v11L6 5.500z" fill="#555" />
          </svg>
        )}
      </div>
      <div className="flex w-[119px] items-center border-r-2 border-b-2 border-[#cccccc] pt-[2px] pl-[5px] tracking-[-0.15px]">{name}</div>
      <div
        className={
          "flex grow items-center border-r-2 border-b-2 border-[#cccccc] pl-[5px] whitespace-pre " +
          (name === "Placement" ? "pt-[3px] tracking-[-0.4px]" : "pt-[4px] tracking-[-0.08px]")
        }
      >
        {value}
      </div>
    </div>
  );
}

function Dock() {
  return (
    <div className="flex w-[752px] shrink-0 bg-[#eeeeee] text-[19.200px]">
      <div className="flex w-[741px] shrink-0 flex-col">
        <div className="flex h-[29px] shrink-0 items-center pl-[2px] leading-none">
          <span className="grow pt-[3px]">组合浏览器</span>
          <svg width="39" height="18" viewBox="0 0 39 18" fill="none" stroke="#6e6e6a" strokeWidth="1.400" className="-mt-px">
            <rect x="1.200" y="1.200" width="15" height="15" rx="3" />
            <rect x="4.500" y="7.500" width="5.500" height="5.500" rx="1" />
            <path d="M8 5.500q0-1 1-1h4q1 0 1 1v4q0 1-1 1h-1" />
            <rect x="22.200" y="1.200" width="15" height="15" rx="3" />
            <path d="M26 5l7.500 7.500M33.500 5L26 12.500" strokeWidth="3.200" />
          </svg>
        </div>
        <div className="flex h-[39px] shrink-0 items-end leading-none">
          <div className="flex h-[39px] w-[72px] items-center justify-center rounded-tr-[4px] border-t border-r border-[#b8b8b8] bg-[#fbfbfb] pt-[3px] pr-[5px]">模型</div>
          <div className="mb-px flex h-[36px] w-[73px] items-center justify-center rounded-tr-[4px] border-t border-r border-b border-[#b0b0b0] bg-[#e7e7e7] pt-[6px]">任务</div>
          <div className="mb-px h-px grow bg-[#b0b0b0]" />
        </div>
        <div className="h-[3px] shrink-0 border-b border-[#d8d8d8] bg-[#fafafa]" />
        <TreePane />
        <div className="flex h-[7px] w-[740px] shrink-0 items-center justify-center bg-[#f7f7f7] pl-1">
          <svg width="26" height="3" viewBox="0 0 26 3" fill="#b9b9b9">
            {[0, 4.500, 9, 13.500, 18, 22.500].map((x) => (
              <rect key={x} x={x} y=".5" width="1.600" height="1.600" />
            ))}
          </svg>
        </div>
        <div className="flex w-[739px] grow flex-col border-t border-r border-[#c2c2c2] bg-white pt-[2px] pl-[2px]">
          <div className="flex w-[734px] grow flex-col border-t border-r border-l border-[#c6c6c6]">
            <div className="flex h-[36px] shrink-0 leading-none">
              <div className="flex w-[149px] items-center border-r-2 border-b-2 border-[#c2c2c2] bg-linear-to-b from-[#fbfbfb] to-[#e9e9e9] pt-[6px] pl-[3px]">属性</div>
              <div className="flex grow items-center border-b-2 border-[#c2c2c2] bg-linear-to-b from-[#fbfbfb] to-[#e9e9e9] pt-[6px] pl-[3px]">值</div>
            </div>
            <div className="flex h-[38px] shrink-0 bg-[#a0a0a0] pl-[30px] leading-none font-bold text-white">
              <div className="mb-px flex grow items-center border-b border-[#cfcfcf] pt-[4px] pl-[5px]">基本</div>
            </div>
            <PropRow name="Mesh" value="[点： 5212，边线： 15804，面： 10536]" tone="bg-[#f7f7f7]" h="h-[36px]" />
            <PropRow name="Placement" value="[(0.00 0.00 1.00); 0.00 °; (0.00 mm  0.00 mm  0.00 mm)]" tone="bg-white" h="h-[32px]" />
            <PropRow name="Label" value="机架" tone="bg-[#f7f7f7]" h="h-[37px]" arrow={false} />
          </div>
        </div>
      </div>
      <div className="flex grow items-end justify-center border-r border-[#c9c9c9] pb-[267px] pl-1">
        <svg width="3" height="26" viewBox="0 0 3 26" fill="#b0b0b0">
          {[0, 4.500, 9, 13.500, 18, 22.500].map((y) => (
            <rect key={y} x=".5" y={y} width="1.600" height="1.600" />
          ))}
        </svg>
      </div>
    </div>
  );
}

/* ---------- 3D view ---------- */

const LIGHT = "#caffca";
const TOP = "#a0ffa0";
const MID = "#84ff84";
const DEEP = "#78ff78";
const DARK = "#28c828";

function Hole({ x, y }: { x: number; y: number }) {
  return <ellipse cx={x} cy={y} rx="7.400" ry="6" fill="url(#bore)" transform={`rotate(-10 ${x} ${y})`} />;
}

function MotorBody({ x, y }: { x: number; y: number }) {
  const e = (cx: number, cy: number, f: string) => <ellipse cx={cx} cy={cy} rx="51.200" ry="41.400" fill={f} transform={`rotate(-11 ${cx} ${cy})`} />;
  return (
    <>
      {e(x - 5, y - 17.300, "url(#rim)")}
      <path d={`M${x - 55.500} ${y - 8}l5 17L${x + 50.500} ${y - 10}l-5 -17z`} fill="url(#rim)" />
    </>
  );
}

function MotorFace({ x, y }: { x: number; y: number }) {
  return (
    <>
      <ellipse cx={x} cy={y} rx="51.200" ry="41.400" fill={LIGHT} transform={`rotate(-11 ${x} ${y})`} />
      <ellipse cx={x - 0.500} cy={y} rx="14.600" ry="11.800" fill="url(#bore)" transform={`rotate(-10 ${x} ${y})`} />
      <path d={`M${x - 12} ${y - 6}Q${x - 7} ${y - 11.800} ${x + 1} ${y - 11.800}Q${x + 5} ${y - 11.500} ${x + 7} ${y - 10}Q${x + 3} ${y - 5.500} ${x - 4} ${y - 4.800}Q${x - 9} ${y - 4.500} ${x - 12} ${y - 6}Z`} fill="#575680" />
      <Hole x={x - 8.500} y={y - 23.300} />
      <Hole x={x + 29.500} y={y - 10} />
      <Hole x={x - 30} y={y + 10} />
      <Hole x={x + 8} y={y + 24} />
    </>
  );
}

function Boss({ x, y }: { x: number; y: number }) {
  return (
    <>
      <ellipse cx={x - 1} cy={y - 3.500} rx="14" ry="11.800" fill="url(#rim)" />
      <ellipse cx={x} cy={y} rx="13.800" ry="11.500" fill={LIGHT} />
      <Hole x={x} y={y} />
    </>
  );
}

function Model() {
  const motors: [number, number][] = [
    [1269.800, 546],
    [1655.700, 423.700],
    [1772.300, 758.800],
    [1386.300, 881.300],
  ];
  return (
    <svg className="block h-full w-full" viewBox="752 210 1168 761" preserveAspectRatio="xMinYMin slice">
      <defs>
        <linearGradient id="rim" x1="0" y1="0" x2="1" y2="0">
          <stop offset="0" stopColor="#50f050" />
          <stop offset=".2" stopColor="#7cff7c" />
          <stop offset=".5" stopColor="#a0ffa0" />
          <stop offset=".8" stopColor="#80ff80" />
          <stop offset="1" stopColor="#40e040" />
        </linearGradient>
        <linearGradient id="bore" x1="0" y1="0" x2="1" y2="0">
          <stop offset="0" stopColor="#66f266" />
          <stop offset=".5" stopColor="#9cff9c" />
          <stop offset="1" stopColor="#78fa78" />
        </linearGradient>
        <linearGradient id="post" x1="0" y1="0" x2="1" y2="0">
          <stop offset="0" stopColor="#7cf87c" />
          <stop offset=".5" stopColor="#a4ffa4" />
          <stop offset="1" stopColor="#7cff7c" />
        </linearGradient>
      </defs>

      {motors.map(([x, y]) => (
        <MotorBody key={x} x={x} y={y} />
      ))}

      <path d="M1313.300 510L1601.700 419L1607 432L1317 524z" fill={TOP} />

      <path d="M1425.400 840L1559.700 798.300L1564 810L1429 853z" fill={TOP} />
      <path d="M1582 790L1718 747.700L1722 761L1585 803.500z" fill={TOP} />
      <path d="M1428.800 852.700L1722 759.800L1725 777L1437 868.700L1420 875z" fill={LIGHT} />

      <path d="M1332.400 687.300L1377 672.700L1382 686L1334.800 700z" fill={TOP} />
      <path d="M1334.500 699.500L1381 685.500L1390 700L1382.300 703.300L1341 716.700z" fill={LIGHT} />
      <path d="M1653.300 584.300L1695.700 571.700L1700 585L1655 599z" fill={TOP} />
      <path d="M1655 598.300L1700 584L1706 601L1662.300 614.300L1650 614z" fill={LIGHT} />

      <path d="M1484 524Q1492 519 1495 527L1499 548L1486 542z" fill="#58f058" />
      <path d="M1496.700 532.300L1636.700 583.300L1643 599L1498 547.500z" fill={MID} />
      <path d="M1466.700 542.300L1397.700 650L1389.200 663L1389.900 679L1472.700 554z" fill={DEEP} />
      <path d="M1622.700 611.700L1598.300 650L1550 721.700L1551 740L1631.700 615z" fill={DEEP} />
      <path d="M1414.300 676.700L1542.400 723.300L1550 721.700L1551 740L1408.800 685.500z" fill={MID} />

      <path d="M1498 546.700L1642.700 598.300L1640 618L1632.700 615L1495 563.700L1486 553z" fill={LIGHT} />
      <path d="M1472.700 554L1389.900 678.300L1394 690L1409 685L1486.700 566L1486 553z" fill={LIGHT} />
      <path d="M1631.700 615L1551 739L1556 752L1570.700 746L1647.300 626L1647 615z" fill={LIGHT} />
      <path d="M1408.800 685L1551 739L1554 755L1541.400 755.700L1403 704L1395 694z" fill={LIGHT} />
      <path d="M1541.500 724Q1545 722 1550 721.700L1551 739L1545 736z" fill="#8cff8c" />

      <path d="M1477 490.700L1499.500 547L1490 540L1475 492z" fill={DARK} />
      <path d="M1466.500 530L1471.700 554L1476 545z" fill="#40d840" />
      <path d="M1454 492L1476.500 488L1494 541L1474 546z" fill={LIGHT} />
      <path d="M1570 755.500L1586 802.700L1580 804z" fill={DARK} />
      <path d="M1549.300 764L1569 756L1584.200 803L1583 812L1564 809.500z" fill={LIGHT} />
      <path d="M1316 523.500L1607 431L1612 448L1477 490.700L1455.500 497.500L1320.700 539.300L1300 545z" fill={LIGHT} />

      <path d="M1676 447L1680 458.300L1766.300 706.700L1768 714L1764 712L1672 450z" fill={DARK} />
      <path d="M1655 455L1678.300 456L1765.500 714L1748 721L1706 601z" fill={LIGHT} />
      <path d="M1294.500 579L1317.300 648L1382.300 836.700L1378 838L1290 580z" fill={DARK} />
      <path d="M1268 575L1293 579L1381 837L1361.700 843.300L1310 696.700z" fill={LIGHT} />

      <path d="M1635.500 583Q1645 578.500 1653.500 583L1658 601L1643 601z" fill="url(#post)" />
      <path d="M1375.400 670Q1377 662 1388.500 662L1385 668L1390 682L1385 690L1380 688z" fill="url(#post)" />

      <Boss x={1486} y={553.300} />
      <Boss x={1647.700} y={614} />
      <Boss x={1394.700} y={694.300} />
      <Boss x={1556.600} y={755} />

      {motors.map(([x, y]) => (
        <MotorFace key={x} x={x} y={y} />
      ))}
    </svg>
  );
}

function SewDialog() {
  return (
    <div className="absolute top-[224px] left-[65px] flex h-[201px] w-[298px] flex-col rounded-t-[12px] bg-[#eeeeee] text-[19.300px] leading-none shadow-[0_3px_10px_2px_rgba(20,20,45,0.55)]">
      <div className="flex h-[48px] shrink-0 items-center rounded-t-[12px] border-t border-[#f6f6f6] bg-[#e7e7e7] pr-[12px] pl-[38px]">
        <span className="grow pt-[2px] text-center text-[#202020] [-webkit-text-stroke:0.5px_#202020]">缝接公差</span>
        <svg width="27" height="27" viewBox="0 0 27 27">
          <circle cx="13.500" cy="13.500" r="13.300" fill="#33a852" />
          <path d="M9 9l9 9M18 9l-9 9" stroke="#fff" strokeWidth="3.300" strokeLinecap="round" />
        </svg>
      </div>
      <div className="flex grow flex-col pr-[17px] pl-[17px]">
        <div className="flex h-[56px] items-center pt-[9px]">输入形状缝接的公差:</div>
        <div className="flex h-[35px] shrink-0 overflow-hidden rounded-[4px] border-2 border-[#2f7cab] bg-white">
          <div className="flex grow items-center pt-[3px] pl-[5px] text-[19px]">0.10</div>
          <div className="flex w-[21px] flex-col items-center justify-center gap-[6px] border-l-2 border-[#b5b5b5] bg-[#f8f8f8]">
            <svg width="11" height="6" viewBox="0 0 11 6">
              <path d="M0 6h11L5.500 0z" fill="#555" />
            </svg>
            <svg width="11" height="6" viewBox="0 0 11 6">
              <path d="M0 0h11L5.500 6z" fill="#555" />
            </svg>
          </div>
        </div>
        <div className="mt-[10px] flex justify-end gap-[9px] text-[19px]">
          <div className="flex h-[36px] w-[119px] items-center justify-center rounded-[4px] border-2 border-[#2f7cab] bg-linear-to-b from-[#fbfcfd] to-[#d9e1e9] pt-px">OK</div>
          <div className="flex h-[36px] w-[119px] items-center justify-center rounded-[4px] border-2 border-[#b1b1b1] bg-linear-to-b from-white to-[#efefef] pt-px">Cancel</div>
        </div>
      </div>
    </div>
  );
}

export default function App() {
  return (
    <div className="flex h-[971px] w-[1920px] flex-col overflow-hidden bg-[#eeeeee] font-['Noto_Sans','Noto_Sans_CJK_SC',sans-serif] text-black">
      <Defs />
      <MenuBar />
      <FileBar />
      <ViewBar />
      <PartBar />
      <div className="h-[2px] shrink-0 bg-[#f3f3f3]" />
      <div className="flex min-h-0 grow">
        <Dock />
        <div className="relative grow bg-linear-to-b from-[#333366] to-[#84829b]">
          <Model />
          <SewDialog />
        </div>
      </div>
    </div>
  );
}
